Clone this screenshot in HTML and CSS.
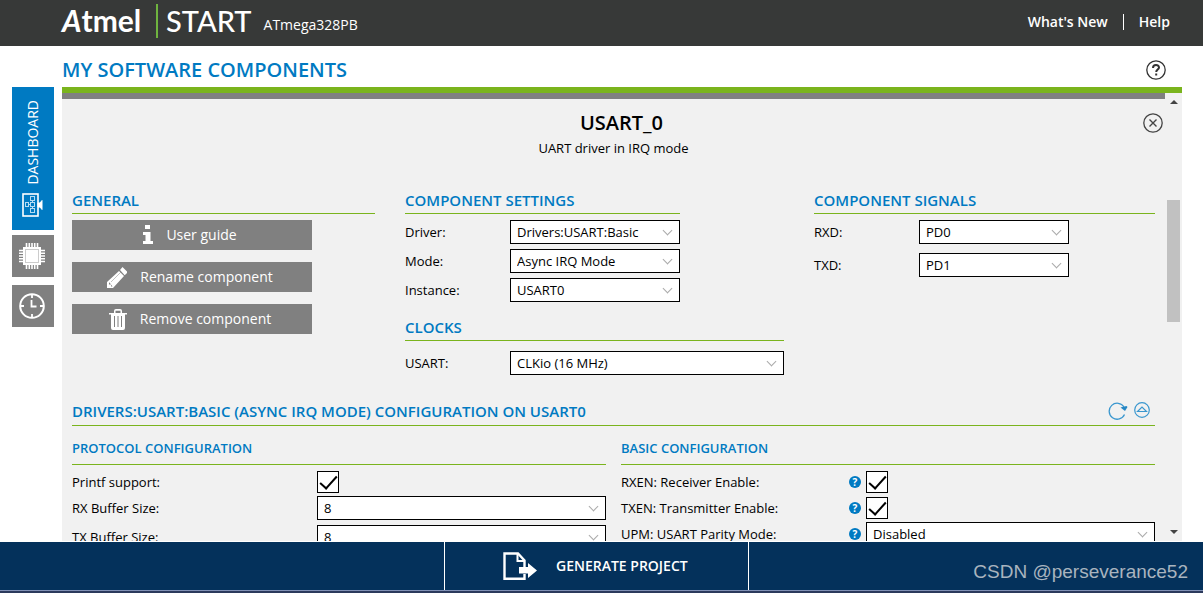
FILE: index.html
```html
<!DOCTYPE html>
<html lang="en">
<head>
<meta charset="utf-8">
<title>Atmel START</title>
<link rel="stylesheet" href="styles.css">
</head>
<body>
<header class="topbar">
  <div class="logo"><span class="logo-atmel"><i>A</i>tmel</span><span class="logo-start">START</span></div>
  <span class="device">ATmega328PB</span>
  <nav class="topnav"><a href="#">What's New</a><a href="#">Help</a></nav>
</header>

<div class="workspace">
  <nav class="sidebar">
    <button class="tab tab-active" type="button">
      <span class="tab-label">DASHBOARD</span>
      <svg width="22" height="24" viewBox="0 0 22 24" fill="none" stroke="#fff">
        <rect x="1" y="1" width="15" height="22" stroke-width="1.6"/>
        <g stroke="#b5dcf3"><rect x="8.500" y="3.500" width="4" height="4"/><rect x="8.500" y="9.500" width="4" height="4"/><rect x="8.500" y="15.500" width="4" height="4"/><rect x="3.500" y="9.500" width="3" height="4"/><path d="M10.500 7.500v2M10.500 13.500v2M6.500 11.500h2"/></g>
        <path d="M16 10h2l2-2.500v9l-2-2.500h-2z" fill="#fff"/>
      </svg>
    </button>
    <button class="tab" type="button" aria-label="Pin configuration">
      <svg width="26" height="26" viewBox="0 0 26 26" fill="none" stroke="#fff">
        <path stroke-width="1.600" d="M7.500 0v26M10.300 0v26M13 0v26M15.700 0v26M18.500 0v26M0 7.500h26M0 10.300h26M0 13h26M0 15.700h26M0 18.500h26"/>
        <rect x="4" y="4" width="18" height="18" fill="#fff" stroke="none"/>
        <rect x="6.500" y="6.500" width="13" height="13" stroke="#ccc"/>
      </svg>
    </button>
    <button class="tab" type="button" aria-label="Clock configuration">
      <svg width="26" height="26" viewBox="0 0 26 26" fill="none" stroke="#fff" stroke-width="2">
        <circle cx="13" cy="13" r="11.800"/><path stroke-width="1.800" d="M13 2v3M13 21v3M2 13h3M21 13h3M12.500 7v6.500h5"/>
      </svg>
    </button>
  </nav>

  <main class="content">
    <div class="page-title">
      <h1>MY SOFTWARE COMPONENTS</h1>
      <button class="icon-button" type="button" aria-label="Help">
        <svg width="20" height="20" viewBox="0 0 20 20" fill="none" stroke="#333"><circle cx="10" cy="10" r="9.200" stroke-width="1.300"/><path stroke-width="2" d="M7 8c0-4 6-3.800 6-.6 0 2-2.800 2.300-2.800 4.600M10.200 13.500v2"/></svg>
      </button>
    </div>
    <div class="panel">
      <div class="viewport">
        <div class="component-head">
          <h2>USART_0</h2>
          <p>UART driver in IRQ mode</p>
          <button class="icon-button close" type="button" aria-label="Close">
            <svg width="20" height="20" viewBox="0 0 20 20" fill="none" stroke="#444"><circle cx="10" cy="10" r="9.200" stroke-width="1.300"/><path stroke-width="1.400" d="M6.500 6.500l7 7M13.500 6.500l-7 7"/></svg>
          </button>
        </div>

        <div class="columns">
          <section>
            <h3>GENERAL</h3>
            <div class="actions">
              <button class="action" type="button">
                <svg width="10" height="20" viewBox="0 0 10 20" fill="#fff"><path d="M2 0h5v4H2zM0 7h7.500v9H10v3H0v-3h2.500v-6H0z"/></svg>
                User guide</button>
              <button class="action" type="button">
                <svg width="20" height="21" viewBox="0 0 20 21" fill="#fff"><path fill-rule="evenodd" d="M0 21v-6L12 4l5 5L6 21zM2 15.500v2h2v2h1.500l-3-4zM13 3l2.500-3L20 4.500V6l-2.300 2.300z"/><path d="M4 15L14 5" stroke="#999" stroke-width=".6"/></svg>
                Rename component</button>
              <button class="action" type="button">
                <svg width="18" height="21" viewBox="0 0 18 21" fill="#fff"><path fill-rule="evenodd" d="M0 4h5V2q0-2 2-2h4q2 0 2 2v2h5v1.500h-2V19q0 2-2 2H4q-2 0-2-2V5.500H0zM6.500 4h5V1.800h-5zM5 7v11h1V7zM8.500 7v11h1V7zM12 7v11h1V7z"/></svg>
                Remove component</button>
            </div>
          </section>
          <section>
            <div class="settings">
              <h3>COMPONENT SETTINGS</h3>
              <div class="fields">
                <div class="field"><label for="driver">Driver:</label><span class="select"><select id="driver"><option>Drivers:USART:Basic</option></select></span></div>
                <div class="field"><label for="mode">Mode:</label><span class="select"><select id="mode"><option>Async IRQ Mode</option></select></span></div>
                <div class="field"><label for="instance">Instance:</label><span class="select"><select id="instance"><option>USART0</option></select></span></div>
              </div>
            </div>
            <h3 class="clocks">CLOCKS</h3>
            <div class="field"><label for="clock">USART:</label><span class="select"><select id="clock"><option>CLKio (16 MHz)</option></select></span></div>
          </section>
          <section>
            <h3>COMPONENT SIGNALS</h3>
            <div class="fields signals">
              <div class="field"><label for="rxd">RXD:</label><span class="select"><select id="rxd"><option>PD0</option></select></span></div>
              <div class="field"><label for="txd">TXD:</label><span class="select"><select id="txd"><option>PD1</option></select></span></div>
            </div>
          </section>
        </div>

        <div class="config-head">
          <h3>DRIVERS:USART:BASIC (ASYNC IRQ MODE) CONFIGURATION ON USART0</h3>
          <div class="config-tools">
            <button class="icon-button" type="button" aria-label="Reset">
              <svg width="20" height="18" viewBox="0 0 20 18" fill="none" stroke="#3a97cf" stroke-width="1.300"><path d="M16.500 12.500A8 8 0 1 1 16 5"/><path fill="#2687c4" stroke="none" d="M12.500 5.500l6-1.500 1 1-2.500 4z"/></svg>
            </button>
            <button class="icon-button collapse" type="button" aria-label="Collapse">
              <svg width="16" height="16" viewBox="0 0 16 16" fill="none" stroke="#3a97cf" stroke-width="1.200"><circle cx="8" cy="8" r="7.300"/><path d="M3.500 9.500h9L8 5z"/></svg>
            </button>
          </div>
        </div>

        <div class="config">
          <section>
            <h4>PROTOCOL CONFIGURATION</h4>
            <div class="option"><label for="printf">Printf support:</label><input class="check" type="checkbox" id="printf" checked></div>
            <div class="option"><label for="rxbuf">RX Buffer Size:</label><span class="select"><select id="rxbuf"><option>8</option></select></span></div>
            <div class="option option-next"><label for="txbuf">TX Buffer Size:</label><span class="select"><select id="txbuf"><option>8</option></select></span></div>
          </section>
          <section>
            <h4>BASIC CONFIGURATION</h4>
            <div class="option"><label for="rxen">RXEN: Receiver Enable:</label><span class="hint">?</span><input class="check" type="checkbox" id="rxen" checked></div>
            <div class="option"><label for="txen">TXEN: Transmitter Enable:</label><span class="hint">?</span><input class="check" type="checkbox" id="txen" checked></div>
            <div class="option"><label for="upm">UPM: USART Parity Mode:</label><span class="hint">?</span><span class="select"><select id="upm"><option>Disabled</option></select></span></div>
          </section>
        </div>
      </div>
      <div class="scrollbar"><span class="arrow arrow-up"></span><span class="thumb"></span><span class="arrow arrow-down"></span></div>
    </div>
  </main>
</div>

<footer class="footer">
  <button class="generate" type="button">
    <svg width="34" height="28" viewBox="0 0 34 28" fill="none" stroke="#fff" stroke-width="2.400"><path d="M21.500 22v4.700H1.500V1.500H15l6.500 7v7"/><path stroke-width="2" d="M14.500 2v7h7"/><path fill="#fff" stroke="none" d="M16 15h9v-4l9 7.500-9 7.500v-4.500h-9z"/></svg>
    GENERATE PROJECT
  </button>
  <span class="credit">CSDN @perseverance52</span>
</footer>
</body>
</html>
```
FILE: styles.css
```css
* { box-sizing: border-box; }
body {
  margin: 0;
  height: 100vh;
  display: flex;
  flex-direction: column;
  overflow: hidden;
  background: #fff;
  color: #000;
  font: 13px/20px "Open Sans", sans-serif;
}
h1, h2, h3, h4, p { margin: 0; }
button, select, input { margin: 0; font: inherit; }
button { border: 0; padding: 0; background: none; cursor: pointer; }
svg { display: block; flex: none; }

.topbar {
  flex: none;
  height: 46px;
  display: flex;
  align-items: center;
  padding: 0 33px 0 62px;
  background: #373938;
  color: #fff;
  font-size: 14px;
}
.logo { display: flex; align-items: center; height: 34px; margin-bottom: 4px; }
.logo-atmel { font: bold 30px/32px Lato, sans-serif; width: 94px; padding-bottom: 2px; }
.logo-start { font: 500 29px/34px Lato, sans-serif; border-left: 2px solid #6fb43f; padding-left: 8px; }
.device { margin: 4px 0 0 12px; }
.topnav { display: flex; margin: 0 0 2px auto; font-weight: 600; }
.topnav a { color: #fff; text-decoration: none; line-height: 16px; }
.topnav a + a { margin-left: 15px; padding-left: 15px; border-left: 1px solid #fff; }

.workspace { flex: 1; min-height: 0; display: flex; gap: 8px; padding: 0 21px 1px 12px; }
.sidebar { flex: none; width: 42px; padding-top: 41px; display: flex; flex-direction: column; gap: 8px; }
.tab { height: 42px; display: flex; flex-direction: column; align-items: center; justify-content: center; padding-right: 3px; background: #808080; color: #fff; }
.tab-active { height: 143px; gap: 9px; padding: 0; background: #007ac2; margin-bottom: -3px; }
.tab-label { writing-mode: vertical-rl; transform: rotate(180deg); font-size: 14px; }

.content { flex: 1; min-width: 0; display: flex; flex-direction: column; }
.page-title { height: 41px; display: flex; align-items: center; justify-content: space-between; padding: 6px 16px 0 0; }
.page-title h1 { font-size: 20px; line-height: 28px; font-weight: 600; color: #007ac2; }
.panel { flex: 1; min-height: 0; display: flex; border-top: 6px solid #7ab41d; background: #f1f1f1; }
.viewport { flex: 1; min-width: 0; overflow: hidden; border-top: 6px solid #808080; padding: 0 10px; }
.component-head { position: relative; padding-top: 10px; text-align: center; }
.component-head h2 { padding-left: 16px; font-size: 20px; line-height: 28px; font-weight: 600; }
.component-head p { line-height: 22px; }
.close { position: absolute; right: -8px; top: 14px; }

.columns { display: grid; grid-template-columns: 303fr 379fr 341fr; gap: 30px; margin-top: 31px; }
h3 { font-size: 15px; line-height: 20px; font-weight: 600; color: #007ac2; }
.columns h3 { border-bottom: 1px solid #7ab41d; padding-bottom: 3px; margin-bottom: 6px; }
.actions { display: flex; flex-direction: column; gap: 12px; width: 240px; }
.action { height: 30px; display: flex; align-items: center; justify-content: center; gap: 13px; padding-right: 4px; background: #808080; color: #fff; font-size: 14px; }
.settings { width: 275px; }
.fields { display: flex; flex-direction: column; gap: 5px; }
.signals { gap: 9px; width: 255px; }
.field { display: flex; align-items: center; }
.field label { width: 105px; flex: none; }
.columns .clocks { margin-top: 15px; margin-bottom: 10px; }

.select { position: relative; flex: 1; height: 24px; display: flex; }
.select select { appearance: none; width: 100%; height: 24px; border: 1px solid #000; border-radius: 0; background: #fff; color: #000; padding: 0 24px 0 6px; }
.select::after { content: ""; position: absolute; right: 9px; top: 7px; width: 6px; height: 6px; border: solid #aaa; border-width: 0 1px 1px 0; transform: rotate(45deg); pointer-events: none; }

.config-head { display: flex; justify-content: space-between; margin-top: 26px; padding-bottom: 4px; border-bottom: 1px solid #7ab41d; }
.config-tools { display: flex; align-items: center; gap: 6px; padding-right: 5px; }
.collapse { padding-bottom: 3px; }
.config { display: grid; grid-template-columns: 1fr 1fr; gap: 15px; }
.config h4 { font-size: 13px; line-height: 20px; font-weight: 600; color: #007ac2; padding: 12px 0 6px; border-bottom: 1px solid #7ab41d; margin-bottom: 4px; }
.option { height: 26px; display: flex; align-items: center; }
.option-next { margin-top: 3px; }
.option label { flex: none; width: 245px; }
.option label:has(+ .hint) { width: 228px; }
.check { appearance: none; width: 22px; height: 22px; border: 1px solid #000; background: #fff; display: flex; justify-content: center; }
.check:checked::after { content: ""; width: 7px; height: 15px; border: solid #000; border-width: 0 2px 2px 0; transform: rotate(42deg); }
.hint { width: 12px; height: 12px; margin-right: 5px; border-radius: 50%; background: #007ac2; color: #fff; font-size: 10px; line-height: 12px; font-weight: 700; text-align: center; }

.scrollbar { width: 17px; flex: none; display: flex; flex-direction: column; align-items: center; padding: 7px 0; }
.arrow { border: 4px solid transparent; }
.arrow-up { border-top: 0; border-bottom-color: #444; }
.arrow-down { margin-top: auto; border-bottom: 0; border-top-color: #444; }
.thumb { width: 13px; height: 28%; margin-top: 96px; background: #c1c1c1; }

.footer { flex: none; height: 51px; display: flex; background: #04315b; border-bottom: 2px solid #2b3a5c; box-shadow: inset 0 -1px #8090b5; }
.generate { width: 305px; margin: 0 0 1px 444px; display: flex; align-items: center; gap: 19px; padding-left: 58px; border: solid #fff; border-width: 0 1px; color: #fff; font-size: 14px; font-weight: 600; }
.credit { margin: 18px 15px 0 auto; color: #a9b4bf; font: 19px/24px "Liberation Sans", Arial, sans-serif; }
```
